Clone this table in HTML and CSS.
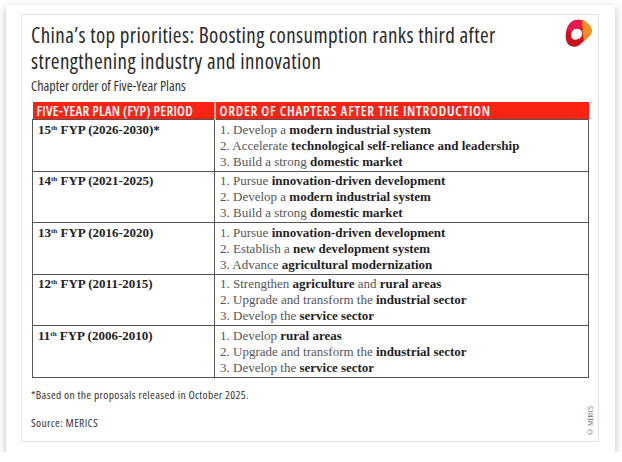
FILE: index.html
```html
<!DOCTYPE html>
<html lang="en">
<head>
<meta charset="utf-8">
<title>China's top priorities</title>
<link rel="stylesheet" href="styles.css">
</head>
<body>
<div class="card">
  <div class="panel">
    <div class="head">
      <div class="titles">
        <h1 class="title">China’s top priorities: Boosting consumption ranks third after strengthening industry and innovation</h1>
        <p class="subtitle">Chapter order of Five-Year Plans</p>
      </div>
      <svg class="logo" viewBox="0 0 28 28" width="29" height="29" aria-label="MERICS">
        <defs>
          <clipPath id="ring">
            <path clip-rule="evenodd" d="M8,3 C12,0 18,0 22,3 C26,6 29,10 27,14 C25,18 20,21 16,25 C12,28 6,27 4,23 C1,18 3,7 8,3 Z M13,9.5 C17,9.5 19,12 18.5,15 C18,18 15,20 12,20 C9,20 7.5,17.5 8,14.5 C8.5,11.5 10,9.5 13,9.5 Z"/>
          </clipPath>
        </defs>
        <g clip-path="url(#ring)">
          <rect x="0" y="0" width="28" height="28" fill="#c8141f"/>
          <polygon points="0,0 20,0 18,9 10,11 0,13" fill="#e8174f"/>
          <polygon points="18,0 28,0 28,28 20,21 19,11" fill="#f4901f"/>
        </g>
      </svg>
    </div>
    <table class="plans">
      <thead>
        <tr><th class="c1">FIVE-YEAR PLAN (FYP) PERIOD</th><th class="c2">ORDER OF CHAPTERS AFTER THE INTRODUCTION</th></tr>
      </thead>
      <tbody>
        <tr>
          <td class="period">15<sup>th</sup> FYP (2026-2030)*</td>
          <td class="items">
            <div>1. Develop a <b>modern industrial system</b></div>
            <div>2. Accelerate <b>technological self-reliance and leadership</b></div>
            <div>3. Build a strong <b>domestic market</b></div>
          </td>
        </tr>
        <tr>
          <td class="period">14<sup>th</sup> FYP (2021-2025)</td>
          <td class="items">
            <div>1. Pursue <b>innovation-driven development</b></div>
            <div>2. Develop a <b>modern industrial system</b></div>
            <div>3. Build a strong <b>domestic market</b></div>
          </td>
        </tr>
        <tr>
          <td class="period">13<sup>th</sup> FYP (2016-2020)</td>
          <td class="items">
            <div>1. Pursue <b>innovation-driven development</b></div>
            <div>2. Establish a <b>new development system</b></div>
            <div>3. Advance <b>agricultural modernization</b></div>
          </td>
        </tr>
        <tr>
          <td class="period">12<sup>th</sup> FYP (2011-2015)</td>
          <td class="items">
            <div>1. Strengthen <b>agriculture</b> and <b>rural areas</b></div>
            <div>2. Upgrade and transform the <b>industrial sector</b></div>
            <div>3. Develop the <b>service sector</b></div>
          </td>
        </tr>
        <tr>
          <td class="period">11<sup>th</sup> FYP (2006-2010)</td>
          <td class="items">
            <div>1. Develop <b>rural areas</b></div>
            <div>2. Upgrade and transform the <b>industrial sector</b></div>
            <div>3. Develop the <b>service sector</b></div>
          </td>
        </tr>
      </tbody>
    </table>
    <p class="note">*Based on the proposals released in October 2025.</p>
    <p class="source">Source: MERICS</p>
    <span class="copy">© MERICS</span>
  </div>
</div>
</body>
</html>
```
FILE: styles.css
```css
html, body {
  margin: 0;
  padding: 0;
  background: #ffffff;
}
body {
  font-family: "Open Sans", "Liberation Sans", sans-serif;
  font-stretch: 75%;
  color: #222;
}
.card {
  margin: 5px 0 0 6px;
  width: 609px;
  height: 447px;
  box-sizing: border-box;
  padding: 9px 16px 10px 15px;
  background: #fff;
  box-shadow: 0 3px 8px rgba(0, 0, 0, 0.28);
}
.panel {
  position: relative;
  height: 100%;
  box-sizing: border-box;
  border: 1px solid #e3e3e3;
  padding: 7px 9px 0 9px;
}
.head {
  display: flex;
  justify-content: space-between;
  align-items: flex-start;
}
.title {
  margin: 0;
  font-size: 21px;
  font-weight: 400;
  font-stretch: 75%;
  letter-spacing: 0.4px;
  line-height: 26px;
  color: #2a2a2a;
}
.subtitle {
  margin: 4px 0 0;
  font-size: 14px;
  font-stretch: 75%;
  line-height: 16px;
  color: #333;
}
.logo {
  flex: none;
  margin: -3px -3px 0 0;
}
.plans {
  margin: 8px 0 0 1px;
  width: 557px;
  border-collapse: collapse;
  table-layout: fixed;
}
.plans th {
  background: #fa2415;
  color: #fff;
  font-size: 14px;
  font-weight: 600;
  font-stretch: 75%;
  letter-spacing: 0.4px;
  text-align: left;
  line-height: 17px;
  padding: 0 4px;
  white-space: nowrap;
}
.plans th.c1 {
  width: 173px;
  letter-spacing: 0.25px;
  border-right: 2px solid #f7a9a3;
}
.plans th.c2 {
  letter-spacing: 0.75px;
}
.plans td {
  border: 1px solid #555;
  vertical-align: top;
  font-family: "Liberation Serif", serif;
  font-size: 13px;
  line-height: 16px;
  padding: 1.5px 4px 1px 5px;
}
.period {
  font-weight: 700;
  color: #222;
}
.period sup {
  font-size: 7px;
  line-height: 0;
  vertical-align: 4px;
}
.items {
  color: #555;
}
.items b {
  color: #1f1f1f;
}
.note {
  margin: 10px 0 0;
  font-size: 11.5px;
  font-stretch: 75%;
  letter-spacing: 0.35px;
  line-height: 14px;
  color: #333;
}
.source {
  margin: 14px 0 0;
  font-size: 11.5px;
  font-stretch: 75%;
  letter-spacing: 0.35px;
  line-height: 14px;
  color: #333;
}
.copy {
  position: absolute;
  right: 3px;
  bottom: 4px;
  writing-mode: vertical-rl;
  transform: rotate(180deg);
  font-size: 7.5px;
  font-stretch: 75%;
  color: #777;
}
```
